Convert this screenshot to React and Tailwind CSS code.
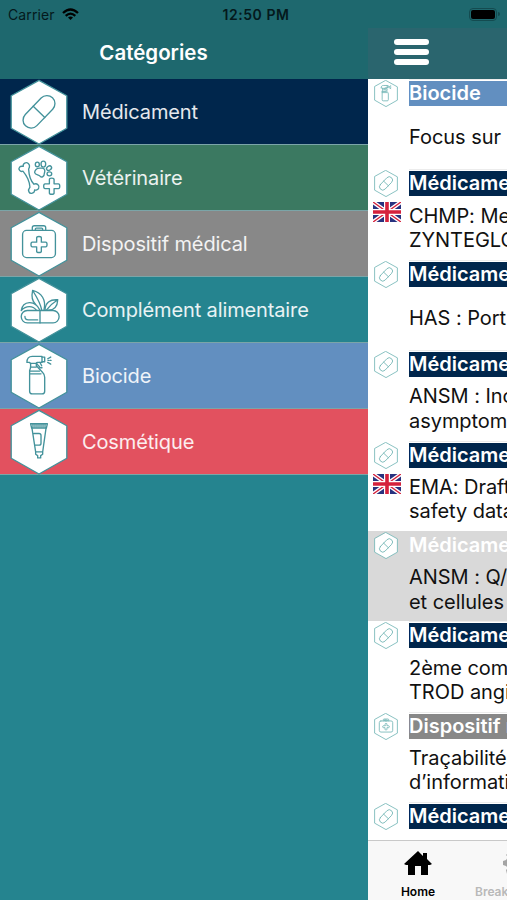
import clsx from 'clsx';

/**
 * Line drawings for each category, drawn around the centre of a 232x197 hexagon tile.
 */
const GLYPHS = {
    medicament: (
        <g transform="rotate(-46 116 98)">
            <rect x="58" y="74" width="116" height="48" rx="24" />
            <path d="M116 74v48" />
        </g>
    ),
    veterinaire: (
        <>
            <path d="M68 78C60 82 53 72 58 66C62 62 68 64 69 64C67 54 78 50 84 55C91 61 86 70 85 72C86 90 92 108 101 117C110 113 119 121 115 129C113 134 106 136 103 134C103 144 90 148 86 140C82 132 88 128 89 126C88 108 78 90 68 78Z" />
            <path d="M107 73C113 66 120 70 126 69C135 70 134 79 132 84C132 94 124 99 119 93C115 88 104 90 103 82C103 78 105 75 107 73Z" />
            <ellipse cx="111" cy="58" rx="6" ry="7" />
            <ellipse cx="129" cy="57" rx="7" ry="9" />
            <ellipse cx="146" cy="69" rx="8" ry="6" transform="rotate(-35 146 69)" />
            <ellipse cx="147" cy="86" rx="7" ry="6" />
            <path d="M147 103q0-4 7-4t7 4v13h13q4 0 4 7t-4 7h-13v13q0 4-7 4t-7-4v-13h-13q-4 0-4-7t4-7h13z" />
        </>
    ),
    dispositif: (
        <>
            <rect x="67" y="58" width="98" height="81" rx="12" />
            <path d="M96 58v-8q0-6 6-6h28q6 0 6 6v8" />
            <rect x="105" y="51" width="22" height="7" rx="3" />
            <path d="M109 80q0-4 7-4t7 4v13h13q4 0 4 7t-4 7h-13v13q0 4-7 4t-7-4v-13h-13q-4 0-4-7t4-7h13z" />
        </>
    ),
    complement: (
        <>
            <rect x="63" y="100" width="113" height="37" rx="18" />
            <path d="M119 100v37M74 118q0 10 10 10h28" />
            <path d="M97 40C93 58 97 74 106 82M97 40C124 47 138 68 131 98M97 40C108 58 120 76 124 98" />
            <path d="M63 100C68 70 104 68 118 98M63 100C78 84 98 86 108 99" />
            <path d="M172 68C148 66 135 78 134 98M172 68C171 88 160 99 144 99M172 68C156 78 146 88 138 99" />
        </>
    ),
    biocide: (
        <>
            <path d="M80 58C80 46 86 40 96 40H125V58H110L106 61H90L88 58Z" />
            <path d="M125 42h8v14h-8M109 60c2 8 8 6 10 14h6M119 58l5 10" />
            <path d="M91 61v9q0 5-3 12v62q0 8 8 8h29q8 0 8-8v-42q0-8-6-14l-19-20v-7M91 72h17M88 84h29M88 92h34" />
            <path d="M142 47l9-5M143 52h2M149 52h3M142 58l9 5" />
        </>
    ),
    cosmetique: (
        <>
            <path d="M91 44h50l-3 13H94ZM98 44v12M104 44v12M110 44v12M116 44v12M122 44v12M128 44v12M134 44v12" />
            <path d="M95 57l11 71h21l10-71M106 128v7l6 4v7h9v-7l6-4v-7M101 73h15q6 0 6 6v23q0 6-6 6h-11" />
        </>
    ),
};

function HexIcon({ name, small }) {
    return (
        <svg
            viewBox="30 0 172 197"
            className={small ? 'h-[27px] w-6' : 'h-[66px] w-[58px]'}
            fill="none"
            stroke={small ? '#70b5b4' : '#43929b'}
            strokeWidth={small ? 6 : 4}
            strokeLinejoin="round"
            strokeLinecap="round"
        >
            <path d="M116 4L199 50V147L116 194L33 147V50Z" fill="#fff" />
            {GLYPHS[name]}
        </svg>
    );
}

function UkFlag() {
    return (
        <svg viewBox="0 0 28 20" className="h-5 w-7">
            <path fill="#28327f" d="M0 0h28v20H0z" />
            <path stroke="#fff" strokeWidth="4" d="M0 0l28 20M28 0L0 20" />
            <path stroke="#d5213c" strokeWidth="1.4" d="M0 0l28 20M28 0L0 20" />
            <path stroke="#fff" strokeWidth="6" d="M14 0v20M0 10h28" />
            <path stroke="#d5213c" strokeWidth="3.6" d="M14 0v20M0 10h28" />
        </svg>
    );
}

const CATEGORIES = [
    { label: 'Médicament', icon: 'medicament', bg: 'bg-[#00264c]' },
    { label: 'Vétérinaire', icon: 'veterinaire', bg: 'bg-[#3b7961]' },
    { label: 'Dispositif médical', icon: 'dispositif', bg: 'bg-[#888888]' },
    { label: 'Complément alimentaire', icon: 'complement', bg: 'bg-[#25848f]' },
    { label: 'Biocide', icon: 'biocide', bg: 'bg-[#628fc0]' },
    { label: 'Cosmétique', icon: 'cosmetique', bg: 'bg-[#e2515f]' },
];

const NEWS = [
    { tag: 'Biocide', icon: 'biocide', bg: 'bg-[#628fc0]', lines: ['Focus sur'] },
    { tag: 'Médicament', icon: 'medicament', bg: 'bg-[#00264c]', lines: ['CHMP: Mee', 'ZYNTEGLO'], uk: true },
    { tag: 'Médicament', icon: 'medicament', bg: 'bg-[#00264c]', lines: ['HAS : Port'] },
    { tag: 'Médicament', icon: 'medicament', bg: 'bg-[#00264c]', lines: ['ANSM : Inc', 'asymptoma'] },
    { tag: 'Médicament', icon: 'medicament', bg: 'bg-[#00264c]', lines: ['EMA: Draft', 'safety data'], uk: true },
    { tag: 'Médicament', icon: 'medicament', bg: '', lines: ['ANSM : Q/R', 'et cellules'], selected: true },
    { tag: 'Médicament', icon: 'medicament', bg: 'bg-[#00264c]', lines: ['2ème comm', 'TROD angi'] },
    { tag: 'Dispositif médical', icon: 'dispositif', bg: 'bg-[#888888]', lines: ['Traçabilité', 'd’informati'] },
    { tag: 'Médicament', icon: 'medicament', bg: 'bg-[#00264c]', lines: [] },
];

function StatusBar() {
    return (
        <div className="flex h-7 shrink-0 items-center justify-between bg-[#1e686e] pr-[7px] pl-2 text-[#04191c]">
            <div className="flex w-40 items-center gap-[7px]">
                <span className="text-[14px] tracking-[0.1px]">Carrier</span>
                <svg viewBox="0 0 17 13" className="h-[13px] w-[17px]" fill="none" stroke="#000" strokeWidth="2.3">
                    <path d="M1 5Q8.500-2 16 5M3.700 7.800Q8.500 3.400 13.300 7.800" />
                    <path d="M8.500 12L6 9.500Q8.500 7.600 11 9.500Z" fill="#000" stroke="none" />
                </svg>
            </div>
            <span className="pl-1 text-[14px] font-semibold tracking-[0.55px]">12:50 PM</span>
            <div className="flex w-40 items-center justify-end gap-px">
                <div className="h-[13px] w-[28px] rounded-[4px] border border-[#144b50] p-px">
                    <div className="h-full rounded-[2px] bg-black" />
                </div>
                <div className="h-1 w-[2px] rounded-r bg-[#144b50]" />
            </div>
        </div>
    );
}

function NewsRow({ item }) {
    return (
        <div className={clsx('flex h-[90.4px] shrink-0', item.selected && 'bg-[#d9d9d9]')}>
            <div className="flex w-[41px] shrink-0 flex-col items-start pt-px pl-[6px]">
                <HexIcon name={item.icon} small />
                {item.uk && (
                    <div className="-ml-px pt-[5px]">
                        <UkFlag />
                    </div>
                )}
            </div>
            <div className={clsx('flex min-w-0 flex-1 flex-col overflow-hidden border-t whitespace-nowrap', item.selected ? 'border-transparent' : 'border-[#ececec]')}>
                <div className={clsx('mt-px h-[25px] shrink-0 text-[20px] leading-[25.500px] font-semibold text-white', item.bg)}>
                    {item.tag}
                </div>
                <div className="flex flex-1 flex-col justify-center text-[20px] leading-[24.500px] tracking-[-0.05px] text-[#111]">
                    {item.lines.map((line) => (
                        <p key={line}>{line}</p>
                    ))}
                </div>
            </div>
        </div>
    );
}

export default function App() {
    return (
        <div className="flex h-[900px] w-[507px] flex-col overflow-hidden bg-[#25848f] font-['Inter',sans-serif]">
            <StatusBar />
            <div className="flex min-h-0 flex-1">
                {/* Category drawer */}
                <div className="w-[368px] shrink-0">
                    <h1 className="h-[51px] bg-[#1e686e] pr-[61px] text-center text-[20.500px] leading-[50px] font-semibold text-white">
                        Catégories
                    </h1>
                    {CATEGORIES.map((cat) => (
                        <div key={cat.label} className={clsx('flex h-[66px] items-center border-b border-[#7ba5a8] pl-[10px] text-[20px] tracking-[-0.13px] text-white/90', cat.bg)}>
                            <HexIcon name={cat.icon} />
                            <span className="pt-px pl-[14px]">{cat.label}</span>
                        </div>
                    ))}
                </div>

                {/* News feed, pushed aside by the drawer */}
                <div className="flex min-w-0 flex-1 flex-col overflow-hidden bg-white">
                    <div className="flex h-[51px] shrink-0 flex-col gap-1 bg-[#2a656e] pt-[11px] pl-[26px]">
                        <div className="h-[6px] w-[35px] rounded-full bg-white" />
                        <div className="h-[6px] w-[35px] rounded-full bg-white" />
                        <div className="h-[6px] w-[35px] rounded-full bg-white" />
                    </div>
                    <div className="flex min-h-0 flex-1 flex-col overflow-hidden">
                        {NEWS.map((item, i) => (
                            <NewsRow key={i} item={item} />
                        ))}
                    </div>
                    <div className="flex h-[60px] shrink-0 overflow-hidden border-t border-[#c9c9c9] bg-[#f8f8f8] text-[12px] font-semibold whitespace-nowrap">
                        <div className="flex w-[100px] shrink-0 flex-col items-center pt-[10px] text-black">
                            <svg viewBox="0 0 28 25" className="h-[25px] w-7">
                                <path d="M14 0L0 13L2 14H4V24H11V15H17V24H24V14H26L28 13L23 8V2H19V5Z" />
                            </svg>
                            <span className="pt-2 leading-4">Home</span>
                        </div>
                        <div className="flex shrink-0 flex-col items-start pt-[10px] pl-[7px] text-[#b9b9b9]">
                            <svg viewBox="0 0 24 25" className="ml-[27px] h-[25px] w-6" fill="#a5a5a5">
                                <path d="M5 3h13v20H5l-1-4 2-2-2-2-3-1v-4l3-1 2-3-2-2z" />
                            </svg>
                            <span className="pt-2 leading-4">Breaking news</span>
                        </div>
                    </div>
                </div>
            </div>
        </div>
    );
}
